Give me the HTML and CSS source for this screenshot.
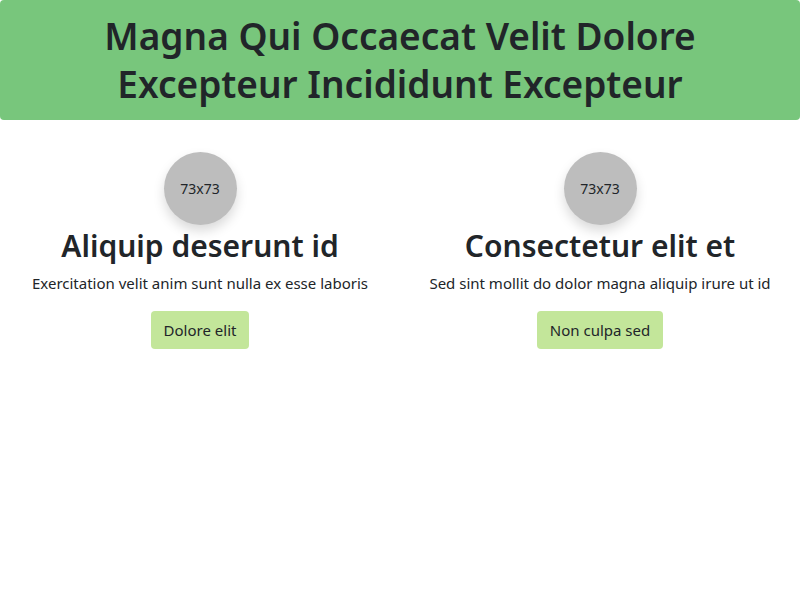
FILE: index.html
```html
<!DOCTYPE html>
<html>
<head>
<meta charset="utf-8">
<link rel="stylesheet" href="styles.css">
</head>
<body>
<header class="hero">
  <h1 class="hero-title">Magna Qui Occaecat Velit Dolore Excepteur Incididunt Excepteur</h1>
</header>
<main class="features">
  <section class="feature">
    <div class="avatar">73x73</div>
    <h2 class="feature-title">Aliquip deserunt id</h2>
    <p class="feature-text">Exercitation velit anim sunt nulla ex esse laboris</p>
    <button class="feature-btn">Dolore elit</button>
  </section>
  <section class="feature">
    <div class="avatar">73x73</div>
    <h2 class="feature-title">Consectetur elit et</h2>
    <p class="feature-text">Sed sint mollit do dolor magna aliquip irure ut id</p>
    <button class="feature-btn">Non culpa sed</button>
  </section>
</main>
</body>
</html>
```
FILE: styles.css
```css
* { box-sizing: border-box; }
body {
  margin: 0;
  font-family: "Noto Sans", "Open Sans", sans-serif;
  color: #212529;
  background: #fff;
}
.hero {
  background: #78c67c;
  border-radius: 4px;
  padding: 12px 0;
  text-align: center;
}
.hero-title {
  margin: 0 auto;
  max-width: 640px;
  font-size: 37px;
  font-weight: 600;
  line-height: 48px;
}
.features {
  display: grid;
  grid-template-columns: 1fr 1fr;
  padding-top: 32px;
}
.feature {
  display: flex;
  flex-direction: column;
  align-items: center;
  text-align: center;
}
.avatar {
  width: 73px;
  height: 73px;
  border-radius: 50%;
  background: #bdbdbd;
  box-shadow: 0 6px 12px rgba(0,0,0,0.15);
  display: flex;
  align-items: center;
  justify-content: center;
  font-size: 14px;
}
.feature-title {
  margin: 2px 0 6px;
  font-size: 30px;
  font-weight: 600;
  line-height: 38px;
}
.feature-text {
  margin: 0 0 16px;
  font-size: 15px;
  line-height: 24px;
}
.feature-btn {
  font-family: inherit;
  font-size: 15px;
  color: #212529;
  background: #c3e69a;
  border: none;
  border-radius: 4px;
  height: 38px;
  padding: 0 13px;
}
```
